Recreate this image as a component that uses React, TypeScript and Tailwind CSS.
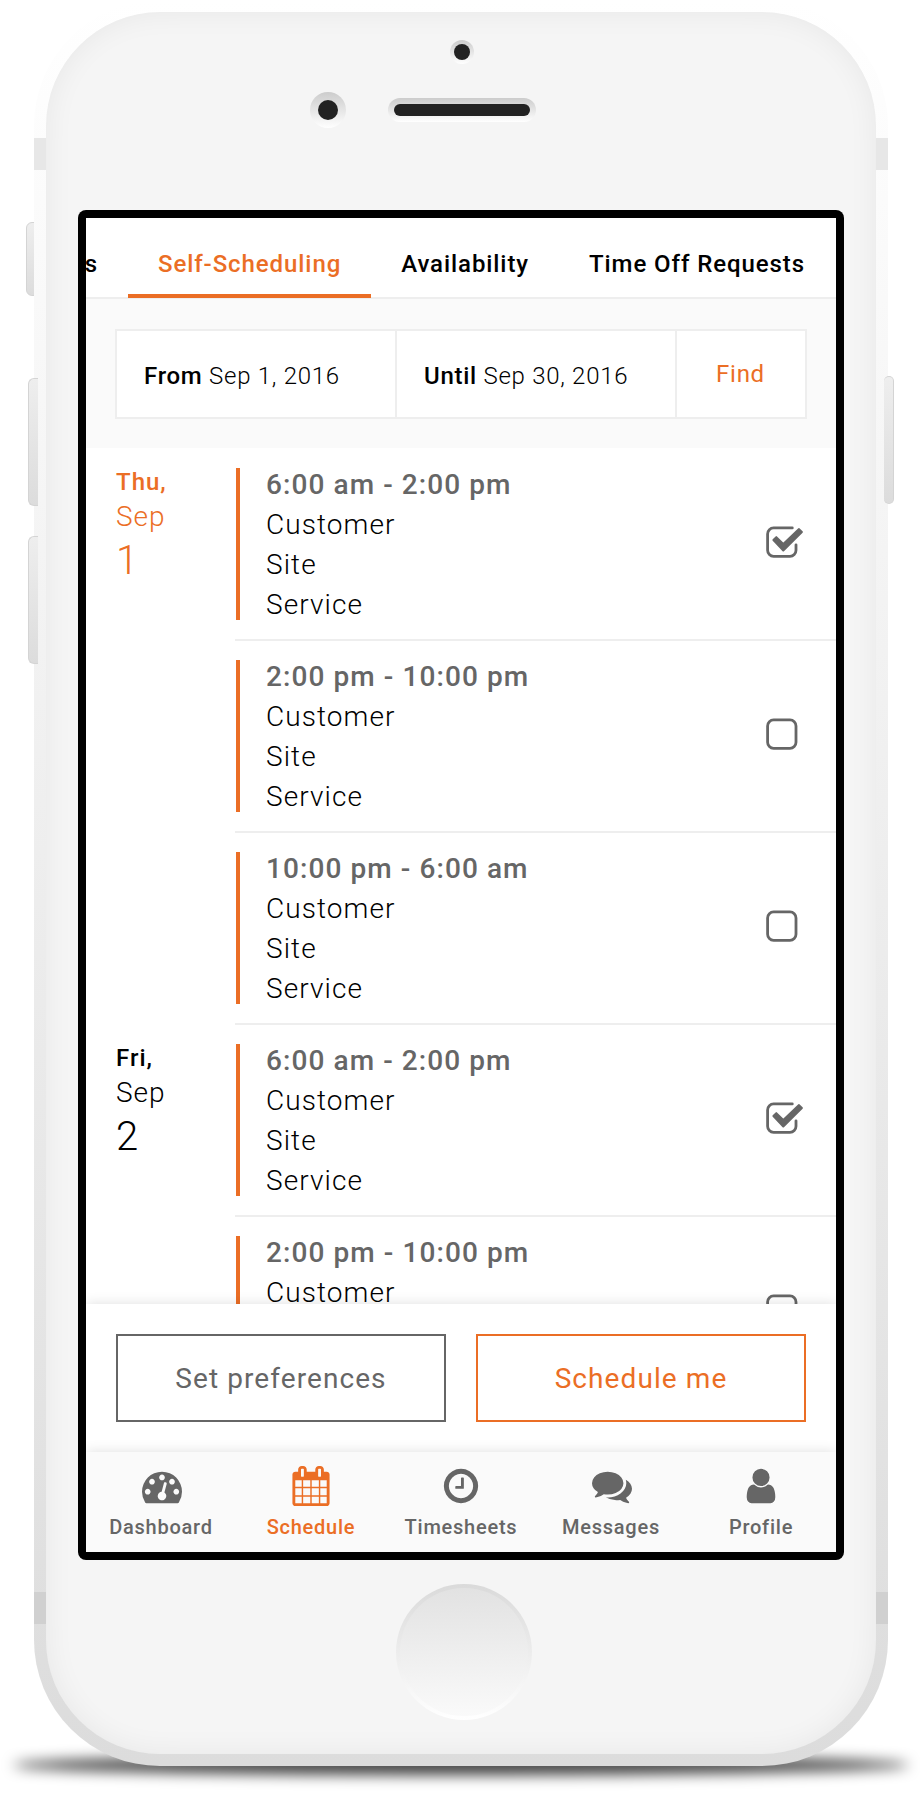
import React from "react";

const ICONS = {
  dashboard:
    "M384 1152q0-53-37.5-90.5t-90.5-37.5-90.5 37.5-37.5 90.5 37.5 90.5 90.5 37.5 90.5-37.5 37.5-90.5zm192-448q0-53-37.5-90.5t-90.5-37.5-90.5 37.5-37.5 90.5 37.5 90.5 90.5 37.5 90.5-37.5 37.5-90.5zm428 481l101-382q6-26-7.5-48.5t-38.5-29.5-48 6.5-30 39.5l-101 382q-60 5-107 43.5t-63 98.5q-20 77 20 146t117 89 146-20 89-117q16-60-6-117t-72-91zm660-33q0-53-37.5-90.5t-90.5-37.5-90.5 37.5-37.5 90.5 37.5 90.5 90.5 37.5 90.5-37.5 37.5-90.5zm-640-640q0-53-37.5-90.5t-90.5-37.5-90.5 37.5-37.5 90.5 37.5 90.5 90.5 37.5 90.5-37.5 37.5-90.5zm448 192q0-53-37.5-90.5t-90.5-37.5-90.5 37.5-37.5 90.5 37.5 90.5 90.5 37.5 90.5-37.5 37.5-90.5zm320 448q0 261-141 483-19 29-54 29h-1402q-35 0-54-29-141-221-141-483 0-182 71-348t191-286 286-191 348-71 348 71 286 191 191 286 71 348z",
  schedule:
    "M192 1664h288v-288h-288v288zm352 0h320v-288h-320v288zm-352-352h288v-320h-288v320zm352 0h320v-320h-320v320zm-352-384h288v-288h-288v288zm736 736h320v-288h-320v288zm-384-736h320v-288h-320v288zm768 736h288v-288h-288v288zm-384-352h320v-320h-320v320zm-352-864v-288q0-13-9.5-22.5t-22.5-9.5h-64q-13 0-22.5 9.5t-9.5 22.5v288q0 13 9.5 22.5t22.5 9.5h64q13 0 22.5-9.5t9.5-22.5zm736 864h288v-320h-288v320zm-384-384h320v-288h-320v288zm384 0h288v-288h-288v288zm32-480v-288q0-13-9.5-22.5t-22.5-9.5h-64q-13 0-22.5 9.5t-9.5 22.5v288q0 13 9.5 22.5t22.5 9.5h64q13 0 22.5-9.5t9.5-22.5zm384-64v1280q0 52-38 90t-90 38h-1408q-52 0-90-38t-38-90v-1280q0-52 38-90t90-38h128v-96q0-66 47-113t113-47h64q66 0 113 47t47 113v96h384v-96q0-66 47-113t113-47h64q66 0 113 47t47 113v96h128q52 0 90 38t38 90z",
  timesheets:
    "M1024 544v448q0 14-9 23t-23 9h-320q-14 0-23-9t-9-23v-64q0-14 9-23t23-9h224v-352q0-14 9-23t23-9h64q14 0 23 9t9 23zm416 352q0-148-73-273t-198-198-273-73-273 73-198 198-73 273 73 273 198 198 273 73 273-73 198-198 73-273zm224 0q0 209-103 385.5t-279.5 279.5-385.5 103-385.5-103-279.5-279.5-103-385.5 103-385.5 279.5-279.5 385.5-103 385.5 103 279.5 279.5 103 385.5z",
  messages:
    "M1408 768q0 139-94 257t-256.5 186.5-353.5 68.5q-86 0-176-16-124 88-278 128-36 9-86 16h-3q-11 0-20.5-8t-11.5-21q-1-3-1-6.5t.5-6.5 2-6l2.5-5 3.5-5.5 4-5 4.5-5 4-4.5q5-6 23-25t26-29.5 22.5-29 25-38.5 20.5-44q-124-72-195-177t-71-224q0-139 94-257t256.5-186.5 353.5-68.5 353.5 68.5 256.5 186.5 94 257zm384 256q0 120-71 224.5t-195 176.5q10 24 20.5 44t25 38.5 22.5 29 26 29.5 23 25q1 1 4 4.5t4.5 5 4 5 3.5 5.5l2.5 5 2 6 .5 6.5-1 6.5q-3 14-13 22t-22 7q-50-7-86-16-154-40-278-128-90 16-176 16-271 0-472-132 58 4 88 4 161 0 309-45t264-129q125-92 192-212t67-254q0-77-23-152 129 71 204 178t75 230z",
  profile:
    "M1536 1399q0 109-62.5 187t-150.5 78h-854q-88 0-150.5-78t-62.5-187q0-85 8.5-160.5t31.5-152 58.5-131 94-89 134.5-34.5q131 128 313 128t313-128q76 0 134.5 34.5t94 89 58.5 131 31.5 152 8.5 160.5zm-256-887q0 159-112.5 271.5t-271.5 112.5-271.5-112.5-112.5-271.5 112.5-271.5 271.5-112.5 271.5 112.5 112.5 271.5z",
};

const NAV = [
  { label: "Dashboard", icon: ICONS.dashboard, active: false, iconClass: "ml-0.5" },
  { label: "Schedule", icon: ICONS.schedule, active: true, iconClass: "-ml-px" },
  { label: "Timesheets", icon: ICONS.timesheets, active: false, iconClass: "" },
  { label: "Messages", icon: ICONS.messages, active: false, iconClass: "ml-0.5" },
  { label: "Profile", icon: ICONS.profile, active: false, iconClass: "-ml-px" },
];

const DAYS = [
  {
    weekday: "Thu,",
    day: "1",
    today: true,
    shifts: [
      { time: "6:00 am - 2:00 pm", checked: true },
      { time: "2:00 pm - 10:00 pm", checked: false },
      { time: "10:00 pm - 6:00 am", checked: false },
    ],
  },
  {
    weekday: "Fri,",
    day: "2",
    today: false,
    shifts: [
      { time: "6:00 am - 2:00 pm", checked: true },
      { time: "2:00 pm - 10:00 pm", checked: false },
    ],
  },
];

function Checkbox({ checked }: { checked: boolean }) {
  return (
    <svg width="38" height="33" viewBox="0 0 38 33" fill="none" stroke="#666" strokeWidth="2.8">
      {checked ? (
        <>
          <path
            d="M26.3 1.9H7.6A6 6 0 0 0 1.6 7.900V24.300A6 6 0 0 0 7.600 30.300H24A6 6 0 0 0 30 24.300V18.800"
            strokeLinecap="round"
          />
          <path
            d="M7.400 14L10.300 11.100L17.300 18L33 3.100L35.900 6L17.300 24.500Z"
            fill="#666"
            strokeWidth="2"
            strokeLinejoin="round"
          />
        </>
      ) : (
        <rect x="1.6" y="1.9" width="28.4" height="28.4" rx="6" />
      )}
    </svg>
  );
}

function Shift({ time, checked }: { time: string; checked: boolean }) {
  return (
    <div className="flex h-48 shrink-0 items-start border-b-2 border-[#eee] pt-[19px] pl-px">
      <div className="h-[152px] w-1 bg-[#eb6e25]" />
      <div className="-mt-[3px] flex-1 pl-[26px] text-[28px] leading-10 font-light tracking-[1.08px]">
        <div className="font-medium text-[#666]">{time}</div>
        <div>Customer</div>
        <div>Site</div>
        <div>Service</div>
      </div>
      <div className="mt-[58px] mr-8">
        <Checkbox checked={checked} />
      </div>
    </div>
  );
}

function Screen() {
  return (
    <div className="flex h-[1334px] w-[750px] flex-col overflow-hidden bg-white text-black">
      <div className="flex h-[81px] shrink-0 justify-end border-b-2 border-[#eee] pr-px text-2xl font-medium tracking-[0.92px] whitespace-nowrap">
        <div className="pt-[30px] pr-[30px]">s</div>
        <div className="h-20 border-b-4 border-[#eb6e25] px-[30px] pt-[30px] text-[#eb6e25]">Self-Scheduling</div>
        <div className="px-[30px] pt-[30px]">Availability</div>
        <div className="px-[30px] pt-[30px]">Time Off Requests</div>
      </div>
      <div className="h-[149px] shrink-0 bg-[#fafafa] px-[29px] pt-[30px]">
        <div className="flex h-[90px] border-2 border-[#eee] bg-white text-2xl font-light tracking-[0.72px]">
          <div className="w-[280px] border-r-2 border-[#eee] pt-[29px] pl-[27px]">
            <span className="font-medium">From</span> Sep 1, 2016
          </div>
          <div className="w-[280px] border-r-2 border-[#eee] pt-[29px] pl-[27px]">
            <span className="font-medium">Until</span> Sep 30, 2016
          </div>
          <div className="flex-1 pt-[27px] pr-px text-center font-normal text-[#eb6e25]">Find</div>
        </div>
      </div>
      <div className="min-h-0 flex-1 overflow-hidden pt-px">
        {DAYS.map((d) => (
          <div key={d.weekday} className="flex">
            <div
              className={
                d.today
                  ? "w-[149px] pt-[17px] pl-[30px] font-light tracking-[1px] text-[#eb6e25]"
                  : "w-[149px] pt-[17px] pl-[30px] font-light tracking-[1px]"
              }
            >
              <div className="text-2xl leading-8 font-medium">{d.weekday}</div>
              <div className="text-[28px] leading-[38px]">Sep</div>
              <div className="text-[40px] leading-[50px]">{d.day}</div>
            </div>
            <div className="flex-1">
              {d.shifts.map((s) => (
                <Shift key={s.time} time={s.time} checked={s.checked} />
              ))}
            </div>
          </div>
        ))}
      </div>
      <div className="z-10 flex h-[148px] shrink-0 gap-[30px] bg-white p-[30px] text-[28px] tracking-[1.08px] shadow-[0_0_12px_rgba(0,0,0,0.13)]">
        <div className="flex h-[88px] flex-1 items-center justify-center border-2 border-[#666] pt-0.5 text-[#666]">
          Set preferences
        </div>
        <div className="flex h-[88px] flex-1 items-center justify-center border-2 border-[#eb6e25] pt-0.5 text-[#eb6e25]">
          Schedule me
        </div>
      </div>
      <div className="z-20 grid h-[100px] shrink-0 grid-cols-5 bg-[#fafafa] shadow-[0_0_12px_rgba(0,0,0,0.13)]">
        {NAV.map((n) => (
          <div
            key={n.label}
            className={
              n.active
                ? "flex flex-col items-center pt-3.5 text-[#eb6e25]"
                : "flex flex-col items-center pt-3.5 text-[#666]"
            }
          >
            <svg className={n.iconClass} width="40" height="40" viewBox="0 0 1792 1792" fill="currentColor">
              <path d={n.icon} />
            </svg>
            <div className="mt-[7px] text-xl leading-7 font-medium tracking-[0.76px]">{n.label}</div>
          </div>
        ))}
      </div>
    </div>
  );
}

export default function App() {
  return (
    <div className="relative h-[1800px] w-[920px] overflow-hidden bg-white font-[Roboto,sans-serif]">
      <div className="absolute top-[1755px] left-[13px] h-5 w-[896px] rounded-[50%] bg-black/75 blur-[7px]" />
      <div className="absolute top-[222px] left-[26px] h-[74px] w-3 rounded-l-[6px] border border-[#d4d4d4] bg-linear-to-b from-[#eee] to-[#dcdcdc]" />
      <div className="absolute top-0 left-[34px] h-[1766px] w-[854px] rounded-[126px] bg-linear-to-b from-white to-[#dcdcdc]">
        <div className="absolute top-[138px] left-0 h-8 w-full bg-[#e7e7e7]" />
        <div className="absolute top-[1592px] left-0 h-8 w-full bg-[#d0d0d0]" />
        <div className="absolute top-[378px] left-[-6px] h-32 w-2.5 rounded-l-[6px] border border-r-0 border-[#d4d4d4] bg-linear-to-b from-[#eee] to-[#dcdcdc]" />
        <div className="absolute top-[536px] left-[-6px] h-32 w-2.5 rounded-l-[6px] border border-r-0 border-[#d4d4d4] bg-linear-to-b from-[#eee] to-[#dcdcdc]" />
        <div className="absolute top-[376px] right-[-6px] h-32 w-2.5 rounded-[6px] border border-l-0 border-[#d4d4d4] bg-linear-to-b from-[#eee] to-[#dcdcdc]" />
      </div>
      <div className="absolute top-3 left-[46px] h-[1742px] w-[830px] rounded-[114px] bg-[#f5f5f5] shadow-[inset_0_0_30px_rgba(0,0,0,0.06)]" />
      <div className="relative flex h-[1766px] flex-col items-start pt-10">
        <div className="ml-[450px] h-6 w-6 rounded-full bg-linear-to-b from-[#ccc] to-white p-1">
          <div className="h-4 w-4 rounded-full bg-[#222]" />
        </div>
        <div className="mt-7 ml-[310px] flex items-center gap-[42px]">
          <div className="h-9 w-9 rounded-full bg-linear-to-b from-[#ccc] to-white p-2">
            <div className="h-5 w-5 rounded-full bg-[#222]" />
          </div>
          <div className="h-6 w-[148px] rounded-full bg-linear-to-b from-[#ccc] to-white p-1.5">
            <div className="h-3 w-[136px] rounded-full bg-[#222]" />
          </div>
        </div>
        <div className="mt-[82px] ml-[78px] rounded-[8px] bg-black p-2">
          <Screen />
        </div>
        <div className="mt-6 ml-[396px] h-[136px] w-[136px] rounded-full bg-linear-to-b from-[#dadada] to-white p-1">
          <div className="h-full w-full rounded-full bg-linear-to-b from-[#e2e2e2] to-[#fafafa]" />
        </div>
      </div>
    </div>
  );
}
